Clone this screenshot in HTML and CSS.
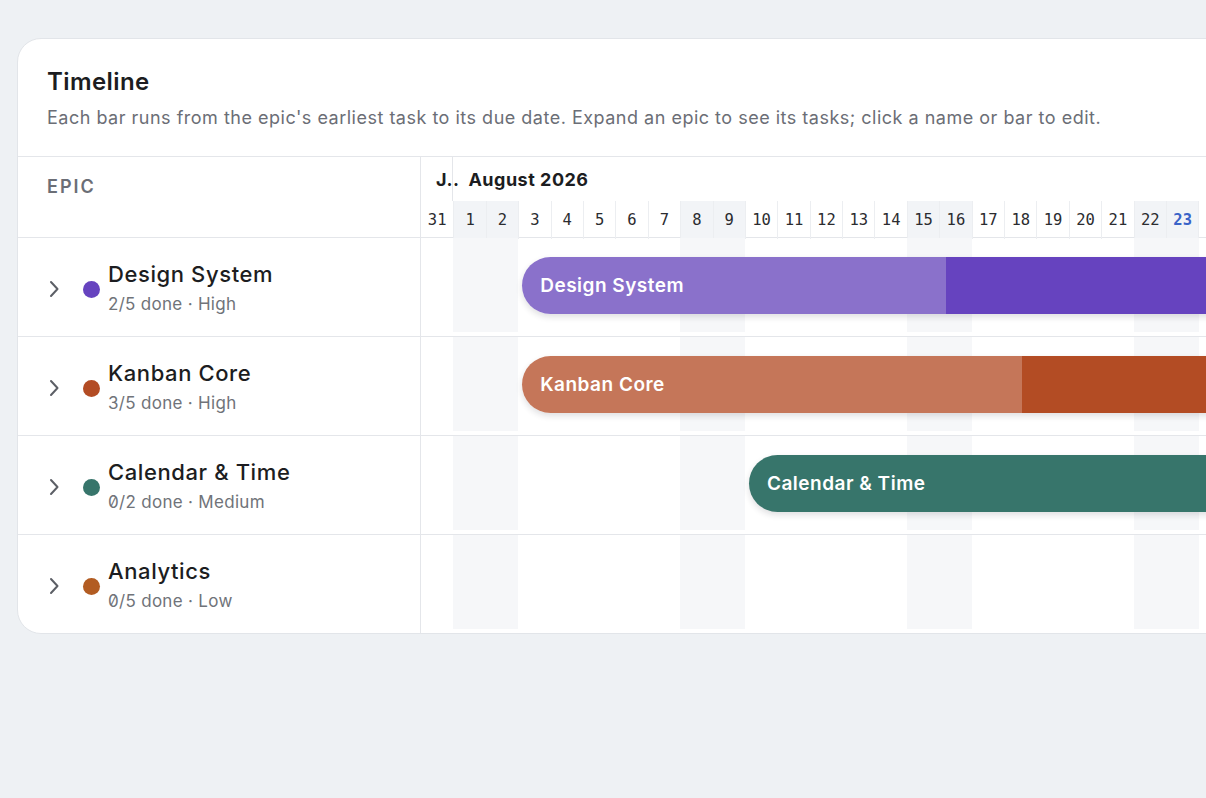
FILE: index.html
```html
<!DOCTYPE html>
<html>
<head>
    <title>Timeline</title>
    <link rel="stylesheet" href="styles.css">
</head>
<body>
    <section class="card">
        <div class="card-header">
            <h1>Timeline</h1>
            <p>Each bar runs from the epic's earliest task to its due date. Expand an epic to see its tasks; click a name or bar to edit.</p>
        </div>

        <div class="gantt">
            <!-- column headings: epic list + date scale -->
            <div class="gantt-head">
                <div class="epic-head">EPIC</div>
                <div class="scale">
                    <div class="months">
                        <div class="month month-short">J..</div>
                        <div class="month">August 2026</div>
                    </div>
                    <div class="days">
                        <span class="day">31</span>
                        <span class="day weekend">1</span>
                        <span class="day weekend">2</span>
                        <span class="day">3</span>
                        <span class="day">4</span>
                        <span class="day">5</span>
                        <span class="day">6</span>
                        <span class="day">7</span>
                        <span class="day weekend">8</span>
                        <span class="day weekend">9</span>
                        <span class="day">10</span>
                        <span class="day">11</span>
                        <span class="day">12</span>
                        <span class="day">13</span>
                        <span class="day">14</span>
                        <span class="day weekend">15</span>
                        <span class="day weekend">16</span>
                        <span class="day">17</span>
                        <span class="day">18</span>
                        <span class="day">19</span>
                        <span class="day">20</span>
                        <span class="day">21</span>
                        <span class="day weekend">22</span>
                        <span class="day weekend today">23</span>
                        <span class="day">24</span>
                        <span class="day">25</span>
                        <span class="day">26</span>
                        <span class="day">27</span>
                        <span class="day">28</span>
                        <span class="day weekend">29</span>
                        <span class="day weekend">30</span>
                        <span class="day">31</span>
                    </div>
                </div>
            </div>

            <div class="gantt-row">
                <div class="epic">
                    <button class="toggle" aria-label="Expand">
                        <svg width="20" height="20" viewBox="0 0 20 20"><polyline points="7 3 13.5 10 7 17"/></svg>
                    </button>
                    <span class="dot dot-purple"></span>
                    <div class="epic-text">
                        <div class="epic-name">Design System</div>
                        <div class="epic-meta">2/5 done · High</div>
                    </div>
                </div>
                <div class="track">
                    <div class="bar bar-purple" style="grid-column: 4 / span 33; --done: 40%">Design System</div>
                </div>
            </div>

            <div class="gantt-row">
                <div class="epic">
                    <button class="toggle" aria-label="Expand">
                        <svg width="20" height="20" viewBox="0 0 20 20"><polyline points="7 3 13.5 10 7 17"/></svg>
                    </button>
                    <span class="dot dot-rust"></span>
                    <div class="epic-text">
                        <div class="epic-name">Kanban Core</div>
                        <div class="epic-meta">3/5 done · High</div>
                    </div>
                </div>
                <div class="track">
                    <div class="bar bar-rust" style="grid-column: 4 / span 26; --done: 60%">Kanban Core</div>
                </div>
            </div>

            <div class="gantt-row">
                <div class="epic">
                    <button class="toggle" aria-label="Expand">
                        <svg width="20" height="20" viewBox="0 0 20 20"><polyline points="7 3 13.5 10 7 17"/></svg>
                    </button>
                    <span class="dot dot-teal"></span>
                    <div class="epic-text">
                        <div class="epic-name">Calendar &amp; Time</div>
                        <div class="epic-meta">0/2 done · Medium</div>
                    </div>
                </div>
                <div class="track">
                    <div class="bar bar-teal" style="grid-column: 11 / span 16; --done: 0%">Calendar &amp; Time</div>
                </div>
            </div>

            <div class="gantt-row">
                <div class="epic">
                    <button class="toggle" aria-label="Expand">
                        <svg width="20" height="20" viewBox="0 0 20 20"><polyline points="7 3 13.5 10 7 17"/></svg>
                    </button>
                    <span class="dot dot-amber"></span>
                    <div class="epic-text">
                        <div class="epic-name">Analytics</div>
                        <div class="epic-meta">0/5 done · Low</div>
                    </div>
                </div>
                <div class="track"></div>
            </div>
        </div>
    </section>
</body>
</html>
```

FILE: styles.css
```css
body {
    margin: 0;
    background: #eef1f4;
    font-family: Inter, "Noto Sans", sans-serif;
    color: #1c1d21;
    overflow: hidden;
}
.card {
    margin: 38px 0 0 17px;
    width: 1760px;
    background: #fff;
    border: 1px solid #e2e5e9;
    border-radius: 24px;
    overflow: hidden;
}
.card-header {
    padding: 28px 29px 0;
    height: 89px;
    border-bottom: 1px solid #e4e6ea;
}
.card-header h1 {
    margin: 0;
    font-size: 24px;
    line-height: 30px;
    font-weight: 600;
    letter-spacing: 0.4px;
}
.card-header p {
    margin: 9px 0 0;
    font-size: 18px;
    line-height: 24px;
    letter-spacing: 0.5px;
    color: #6b6e76;
}

/* grid: 403px epic list, then one 32.4px column per day */
.gantt-head,
.gantt-row {
    display: flex;
}
.gantt-head {
    border-bottom: 1px solid #e4e6ea;
}
.epic-head,
.epic {
    width: 403px;
    flex-shrink: 0;
    border-right: 1px solid #e4e6ea;
    box-sizing: border-box;
}
.epic-head {
    padding: 19px 0 0 29px;
    font-size: 18px;
    font-weight: 600;
    letter-spacing: 2px;
    color: #6b6e76;
}
.months {
    display: flex;
    height: 44px;
}
.month {
    font-size: 18px;
    font-weight: 700;
    line-height: 45px;
    letter-spacing: 0.5px;
    padding-left: 15px;
    white-space: nowrap;
}
.month-short {
    width: 32.4px;
    box-sizing: border-box;
    border-right: 1px solid #e4e6ea;
}
.days {
    display: grid;
    grid-template-columns: repeat(32, 32.4px);
    height: 36px;
}
.day {
    font-family: "DejaVu Sans Mono", monospace;
    font-size: 15.5px;
    line-height: 38px;
    text-align: center;
    color: #2b2c30;
    border-left: 1px solid #eceef1;
}
.day:first-child {
    border-left: none;
}
.day.weekend {
    background: #f2f4f7;
}
.day.today {
    color: #3a63c8;
    font-weight: 700;
}

.gantt-row {
    border-bottom: 1px solid #e4e6ea;
}
.gantt-row:last-child {
    border-bottom: none;
}
.epic {
    height: 98px;
    display: flex;
    align-items: center;
    padding-left: 26px;
}
.toggle {
    border: none;
    background: none;
    padding: 0;
    width: 20px;
    height: 20px;
    margin-top: 4px;
    cursor: pointer;
}
.toggle svg {
    fill: none;
    stroke: #5c5f66;
    stroke-width: 2;
    stroke-linecap: round;
    stroke-linejoin: round;
}
.dot {
    width: 17px;
    height: 17px;
    border-radius: 50%;
    margin: 4px 8px 0 19px;
    flex-shrink: 0;
}
.dot-purple { background: #6643bf; }
.dot-rust { background: #b34c24; }
.dot-teal { background: #37756b; }
.dot-amber { background: #b25c22; }

.epic-name {
    font-size: 22px;
    line-height: 28px;
    font-weight: 500;
    letter-spacing: 0.6px;
}
.epic-meta {
    margin-top: 5px;
    font-size: 17px;
    line-height: 22px;
    letter-spacing: 0.3px;
    color: #707379;
    font-feature-settings: "zero";
}

/* weekend shading repeats every seven days, starting Sat Aug 1 */
.track {
    flex: 1;
    height: 98px;
    box-sizing: border-box;
    padding-bottom: 4px;
    display: grid;
    grid-template-columns: repeat(42, 32.4px);
    align-items: center;
    background-image: repeating-linear-gradient(to right,
        transparent 0, transparent 32.4px,
        #f6f7f9 32.4px, #f6f7f9 97.2px,
        transparent 97.2px, transparent 226.8px);
    background-clip: content-box;
}
.bar {
    grid-row: 1;
    height: 57px;
    margin: 0 4px;
    border-radius: 29px;
    padding-left: 18px;
    color: #fff;
    font-size: 19px;
    font-weight: 600;
    line-height: 57px;
    letter-spacing: 0.5px;
    white-space: nowrap;
    box-shadow: 0 3px 6px rgba(30, 30, 40, 0.14);
    cursor: pointer;
}
.bar-purple {
    background: linear-gradient(to right, #8a71cb var(--done), #6643bf var(--done));
}
.bar-rust {
    background: linear-gradient(to right, #c57659 var(--done), #b34c24 var(--done));
}
.bar-teal {
    background: #37756b;
}
```
